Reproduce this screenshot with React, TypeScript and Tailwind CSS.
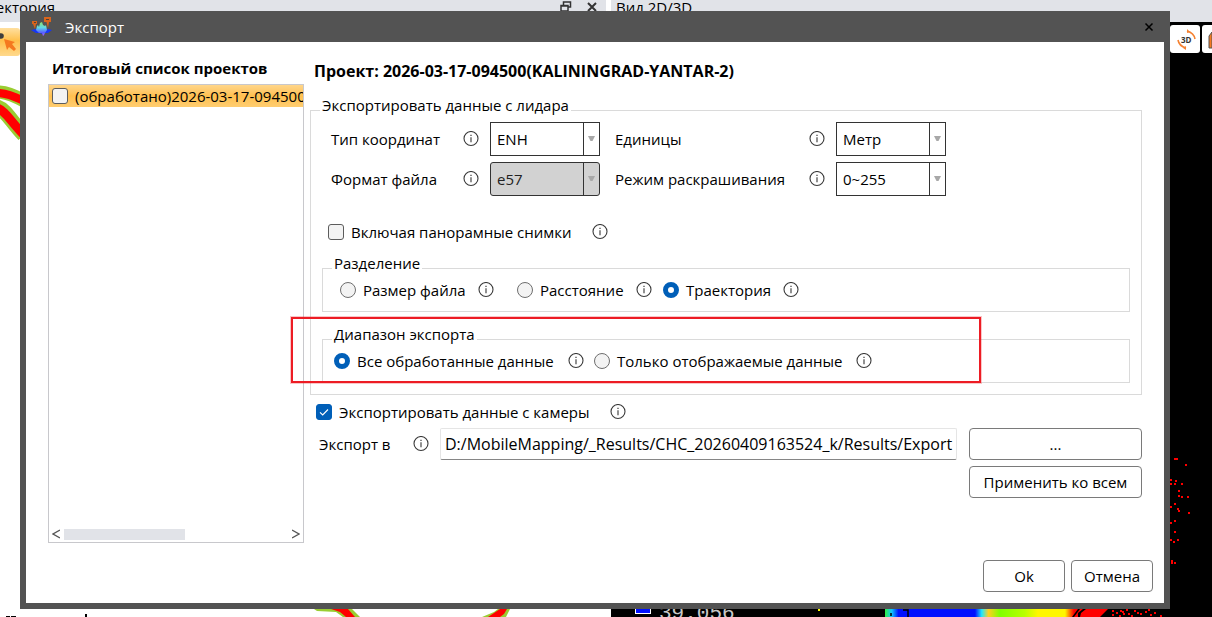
import type { ReactNode } from 'react';

function InfoIcon() {
  return (
    <svg width="16" height="16" viewBox="0 0 16 16" fill="none" className="shrink-0" aria-hidden="true">
      <circle cx="8" cy="7.500" r="7" stroke="#3a3a3a" strokeWidth="1.1" />
      <path d="M8 6.300V11.300" stroke="#555" strokeWidth="1.300" />
      <path d="M8 3.700V5.100" stroke="#555" strokeWidth="1.400" />
    </svg>
  );
}

function AppLogo() {
  return (
    <svg width="22" height="20" viewBox="0 0 22 20" aria-hidden="true">
      <defs>
        <linearGradient id="wave" x1="0" y1="0" x2="0" y2="1">
          <stop offset="0" stopColor="#8fe36a" />
          <stop offset="0.4" stopColor="#5fd8e8" />
          <stop offset="0.75" stopColor="#5a62ff" />
          <stop offset="1" stopColor="#b060ff" />
        </linearGradient>
      </defs>
      <path d="M0 13L5 12L8 14H14L17 12L21 13L17 16H13L11 17L9 16H5Z" fill="#1636f5" />
      <path d="M5 13L6 9L7 8L8 10L9 6L11 5L12 8L14 9L15 8L16 13L14 16L13 18L12 19L11 16H8Z" fill="url(#wave)" />
      <path d="M1 4H6V7H5L4 12L2 7H1Z" fill="#d9641c" />
      <path d="M13 0H20V5H18L17 11L15.500 5H13Z" fill="#d9641c" />
      <path d="M15 2H18V3H15Z M3 5H5V6H3Z" fill="#50403a" />
    </svg>
  );
}

function SelectBox({ id, value, disabled }: { id: string; value: string; disabled?: boolean }) {
  return (
    <div className="relative h-[34px] w-[110px]">
      <select
        id={id}
        disabled={disabled}
        className="h-full w-full appearance-none border border-[#333] bg-white pl-1.5 pr-5 text-black disabled:rounded-[3px] disabled:bg-[#d2d2d2] disabled:text-[#222] disabled:opacity-100"
      >
        <option>{value}</option>
      </select>
      <span className="pointer-events-none absolute inset-y-0 right-0 flex w-[17px] items-center border-l border-[#333] pl-1">
        <svg width="7" height="6" viewBox="0 0 7 6" aria-hidden="true">
          <path d="M0 0H7L4.500 5H2.500Z" fill="#a8a8a8" />
        </svg>
      </span>
    </div>
  );
}

function Group({ title, className, children }: { title: string; className: string; children: ReactNode }) {
  return (
    <fieldset className={`min-w-0 border border-[#dadada] ${className}`}>
      <legend className="px-0.5 pb-2.5 leading-[14px]">{title}</legend>
      {children}
    </fieldset>
  );
}

function RadioOption({ name, label, checked }: { name: string; label: string; checked?: boolean }) {
  return (
    <label className="flex items-center gap-[7px] whitespace-nowrap">
      <input
        type="radio"
        name={name}
        defaultChecked={checked}
        className="size-4 shrink-0 appearance-none rounded-full border border-[#6e6e6e] bg-[#f3f3f3] checked:border-5 checked:border-[#005fb8] checked:bg-white"
      />
      {label}
    </label>
  );
}

function CheckBox({ label, checked }: { label: string; checked?: boolean }) {
  return (
    <label className="flex items-center gap-[7px] whitespace-nowrap">
      <span className="relative flex size-4 shrink-0">
        <input
          type="checkbox"
          defaultChecked={checked}
          className="peer size-4 appearance-none rounded-[3px] border border-[#5c5c5c] bg-[#f3f3f3] checked:border-[#005fb8] checked:bg-[#005fb8]"
        />
        <svg viewBox="0 0 16 16" fill="none" className="pointer-events-none absolute inset-0 hidden peer-checked:block" aria-hidden="true">
          <path d="M4 8.300L6.700 11L12 5.500" stroke="#fff" strokeWidth="1.100" />
        </svg>
      </span>
      {label}
    </label>
  );
}

function TrajectoryPane() {
  return (
    <section className="flex w-[606px] shrink-0 flex-col overflow-hidden bg-white">
      <header className="flex h-[22px] items-start justify-between bg-[#e1e3e8] leading-[14px]">
        <span className="flex w-[55px] justify-end">Траектория</span>
        <span className="flex gap-3.5 pr-2">
          <svg width="12" height="12" viewBox="0 0 12 12" fill="none" aria-hidden="true">
            <path d="M3.500 5V2H10.500V7H8M3 2H11" stroke="#333" strokeWidth="1.500" />
            <path d="M1 5.500H8V11H1ZM1 6H8" stroke="#333" strokeWidth="1.500" />
          </svg>
          <svg width="12" height="12" viewBox="0 0 12 12" aria-hidden="true">
            <path d="M2 3L10 11M10 3L2 11" stroke="#333" strokeWidth="2" />
          </svg>
        </span>
      </header>
      <svg width="606" height="595" viewBox="0 22 606 595" fill="none" aria-hidden="true">
        <defs>
          <linearGradient id="tool" x1="0" y1="0" x2="0" y2="1">
            <stop offset="0" stopColor="#ffe0a0" />
            <stop offset="0.45" stopColor="#ffc04c" />
            <stop offset="1" stopColor="#ffd98c" />
          </linearGradient>
        </defs>
        <rect x="-8" y="28" width="28" height="28" rx="3" fill="url(#tool)" />
        <circle cx="1" cy="36" r="2.800" fill="#3d3d3d" />
        <path d="M4 39L15 42L12 44L16 49L14 51L9 47L7 50Z" fill="#f5791f" />
        <path d="M-3 92C6 92 13 95 24 101" stroke="#9acd32" strokeWidth="13" />
        <path d="M-3 107C6 110 10 120 24 135" stroke="#9acd32" strokeWidth="15" />
        <path d="M-3 93C6 93 13 96 24 101" stroke="#f00" strokeWidth="8" />
        <path d="M-3 108C6 111 10 121 24 135" stroke="#f00" strokeWidth="9" />
        <path d="M314 609H352L360 617H343L336 612L317 611Z" fill="#9acd32" />
        <path d="M331 609H348L355 617H346L340 612Z" fill="#f00" />
        <path d="M482 617L494 612L498 609H510L506 617Z" fill="#9acd32" />
        <path d="M488 617L500 609H507L504 614L500 617Z" fill="#f00" />
        <path d="M6 616.500H10M11 616.500H16" stroke="#000" />
        <path d="M86 614V617" stroke="#000" strokeWidth="2" />
      </svg>
    </section>
  );
}

const cloudPoints = [
  [1174, 458], [1176, 458], [1185, 464], [1170, 479], [1175, 480], [1170, 483], [1174, 483], [1181, 483],
  [1178, 490], [1178, 495], [1181, 496], [1187, 496], [1174, 503], [1170, 506], [1177, 508], [1178, 510],
  [1188, 512], [1174, 520], [1170, 522], [1174, 531], [1170, 539], [1173, 541], [1177, 539], [1171, 560],
  [1171, 562], [1174, 562], [1112, 610], [1112, 614], [1116, 612], [1120, 610], [1119, 615], [1123, 613],
  [1122, 611], [1128, 613], [1126, 609], [1131, 615], [1134, 610], [1137, 612], [1140, 613], [1145, 611],
  [1150, 614], [1154, 612], [1148, 609], [1160, 615],
];

function ViewPane() {
  return (
    <section className="flex min-w-0 flex-1 flex-col overflow-hidden bg-black">
      <header className="h-[22px] shrink-0 bg-[#e1e3e8] pl-[5px] leading-[14px]">Вид 2D/3D</header>
      <svg width="601" height="595" viewBox="611 22 601 595" fill="none" className="shrink-0" aria-hidden="true">
        <defs>
          <linearGradient id="height" x1="885" y1="0" x2="1110" y2="0" gradientUnits="userSpaceOnUse">
            <stop offset="0" stopColor="#30f040" />
            <stop offset="0.03" stopColor="#10c8ff" />
            <stop offset="0.06" stopColor="#0010ff" />
            <stop offset="0.4" stopColor="#0010ff" />
            <stop offset="0.43" stopColor="#20e8ff" />
            <stop offset="0.46" stopColor="#ffd020" />
            <stop offset="0.51" stopColor="#80ff00" />
            <stop offset="0.62" stopColor="#b8ff00" />
            <stop offset="0.68" stopColor="#fff600" />
            <stop offset="0.8" stopColor="#fff600" />
            <stop offset="0.84" stopColor="#f00" />
          </linearGradient>
        </defs>
        <rect x="1170" y="25" width="30" height="28" rx="3" fill="#fff" />
        <path d="M1187 31Q1194 33 1195 39M1178 40Q1179 46 1186 48" stroke="#f58232" strokeWidth="1.600" />
        <path d="M1187 29V33L1190 32ZM1186 46V50L1183 48Z" fill="#f58232" />
        <text x="1181" y="43" fill="#333" className="text-[8px] font-bold">3D</text>
        <rect x="1202" y="25" width="30" height="28" rx="3" fill="#fff" />
        <path d="M1209 36L1212 32V48H1209Z" fill="#f5791f" stroke="#555" />
        <path d="M885 609H1108L1100 617H885Z" fill="url(#height)" />
        <path d="M1078 609L1072 617H1074L1080 609ZM1083 609L1078 613V617H1080L1081 613L1086 609Z" fill="#000" />
        <path d="M903 610H908V617M891 613V616" stroke="#000" strokeWidth="1.500" />
        {cloudPoints.map(([x, y]) => (
          <rect key={`${x}-${y}`} x={x} y={y} width="2" height="2" fill="#f00" />
        ))}
        <rect x="635.500" y="602.500" width="15" height="11" fill="#0010ff" stroke="#fff" />
        <text x="659" y="619" fill="#c8c8c8" className="font-['Liberation_Mono'] text-[21px]">39.056</text>
        <rect x="818" y="609" width="2" height="2" fill="#ff0" />
      </svg>
    </section>
  );
}

function ProjectList() {
  return (
    <section className="flex w-64 shrink-0 flex-col">
      <h2 className="pl-1 pt-[17px] pb-[7px] font-bold leading-[18px]">Итоговый список проектов</h2>
      <div className="flex flex-1 flex-col justify-between overflow-hidden border border-[#c8c8cc]">
        <div className="bg-linear-to-b from-[#ffd68a] via-[#ffc04f] to-[#ffcd70] px-[3px] leading-[22px]">
          <CheckBox label="(обработано)2026-03-17-094500(KALININGRAD-YANTAR-2)" />
        </div>
        <div className="flex h-4 items-center px-[3px]">
          <svg width="8" height="10" viewBox="0 0 8 10" fill="none" aria-hidden="true">
            <path d="M8 1L1 5L8 9" stroke="#555" strokeWidth="1.300" />
          </svg>
          <div className="ml-1 h-[11px] w-[121px] bg-[#e1e3e8]"></div>
          <svg width="8" height="10" viewBox="0 0 8 10" fill="none" className="ml-auto" aria-hidden="true">
            <path d="M0 1L7 5L0 9" stroke="#555" strokeWidth="1.300" />
          </svg>
        </div>
      </div>
    </section>
  );
}

function LidarSettings() {
  return (
    <Group title="Экспортировать данные с лидара" className="px-[11px] pb-[11px] [&>legend]:-ml-0.5">
      <div className="grid grid-cols-[132px_27px_125px_194px_27px_110px] items-center gap-y-1.5 pl-[9px]">
        <label htmlFor="coords">Тип координат</label>
        <InfoIcon />
        <SelectBox id="coords" value="ENH" />
        <label htmlFor="units">Единицы</label>
        <InfoIcon />
        <SelectBox id="units" value="Метр" />
        <label htmlFor="format">Формат файла</label>
        <InfoIcon />
        <SelectBox id="format" value="e57" disabled />
        <label htmlFor="coloring">Режим раскрашивания</label>
        <InfoIcon />
        <SelectBox id="coloring" value="0~255" />
      </div>
      <div className="mt-6 flex h-6 items-center gap-5 pl-1.5">
        <CheckBox label="Включая панорамные снимки" />
        <InfoIcon />
      </div>
      <Group title="Разделение" className="mt-3 pb-[11px] pl-[9px]">
        <div className="flex h-5 items-center pl-2">
          <div className="flex w-[177px] items-center gap-3">
            <RadioOption name="split" label="Размер файла" />
            <InfoIcon />
          </div>
          <div className="flex w-[146px] items-center gap-3">
            <RadioOption name="split" label="Расстояние" />
            <InfoIcon />
          </div>
          <div className="flex items-center gap-3">
            <RadioOption name="split" label="Траектория" checked />
            <InfoIcon />
          </div>
        </div>
      </Group>
      <div className="relative mt-[15px]">
        <Group title="Диапазон экспорта" className="pb-[11px] pl-[9px]">
          <div className="flex h-5 items-center pl-0.5">
            <div className="flex w-[260px] items-center gap-3.5">
              <RadioOption name="range" label="Все обработанные данные" checked />
              <InfoIcon />
            </div>
            <div className="flex items-center gap-3.5">
              <RadioOption name="range" label="Только отображаемые данные" />
              <InfoIcon />
            </div>
          </div>
        </Group>
        <div className="pointer-events-none absolute -left-[31px] -top-[10px] bottom-0 w-[690px] border-2 border-[#ed1c24] ring-1 ring-[#ed1c24]/25"></div>
      </div>
    </Group>
  );
}

function ExportDialog() {
  const button = 'rounded-[4px] border border-[#7a7a7a] bg-white h-8 text-center';
  return (
    <div role="dialog" aria-labelledby="title" className="relative mt-[11px] mr-[42px] ml-5 flex min-h-[calc(100vh-19px)] flex-col bg-[#535353] px-1.5 pb-1.5">
      <header className="flex h-[31px] items-center pl-[5px] pr-2.5 text-white">
        <AppLogo />
        <h1 id="title" className="ml-3">Экспорт</h1>
        <button type="button" aria-label="Закрыть" className="ml-auto">
          <svg width="10" height="10" viewBox="0 0 10 10" aria-hidden="true">
            <path d="M1.500 1.500L8.500 8.500M8.500 1.500L1.500 8.500" stroke="#000" strokeWidth="1.500" />
          </svg>
        </button>
      </header>
      <form className="flex flex-1 flex-col bg-white pb-[11px]">
        <div className="flex flex-1 gap-1.5 px-[22px]">
          <ProjectList />
          <section className="min-w-0 flex-1 pt-5">
            <h2 className="mb-[18px] pl-1 text-base leading-[18px] font-bold">Проект: 2026-03-17-094500(KALININGRAD-YANTAR-2)</h2>
            <LidarSettings />
            <div className="mt-[7px] flex h-5 items-center gap-5 pl-1.5">
              <CheckBox label="Экспортировать данные с камеры" checked />
              <InfoIcon />
            </div>
            <div className="mt-1.5 grid grid-cols-[94px_27px_1fr_173px] items-center gap-y-1.5 pl-[9px]">
              <label htmlFor="path">Экспорт в</label>
              <InfoIcon />
              <input
                id="path"
                defaultValue="D:/MobileMapping/_Results/CHC_20260409163524_k/Results/Export"
                className="mr-3 h-8 min-w-0 rounded-[2px] border border-[#e5e5e5] border-b-[#868686] pl-1 text-base"
              />
              <button type="button" className={button}>...</button>
              <button type="button" className={`${button} col-start-4`}>Применить ко всем</button>
            </div>
          </section>
        </div>
        <footer className="flex justify-end gap-1.5 pt-[17px] pr-[11px]">
          <button type="submit" className={`${button} w-[82px]`}>Ok</button>
          <button type="button" className={`${button} w-[82px]`}>Отмена</button>
        </footer>
      </form>
    </div>
  );
}

export default function App() {
  return (
    <main className="relative flow-root min-h-screen overflow-hidden bg-white font-['Open_Sans',sans-serif] text-[15px] leading-5 text-black">
      <div className="absolute inset-0 flex gap-[5px] overflow-hidden">
        <TrajectoryPane />
        <ViewPane />
      </div>
      <ExportDialog />
    </main>
  );
}
